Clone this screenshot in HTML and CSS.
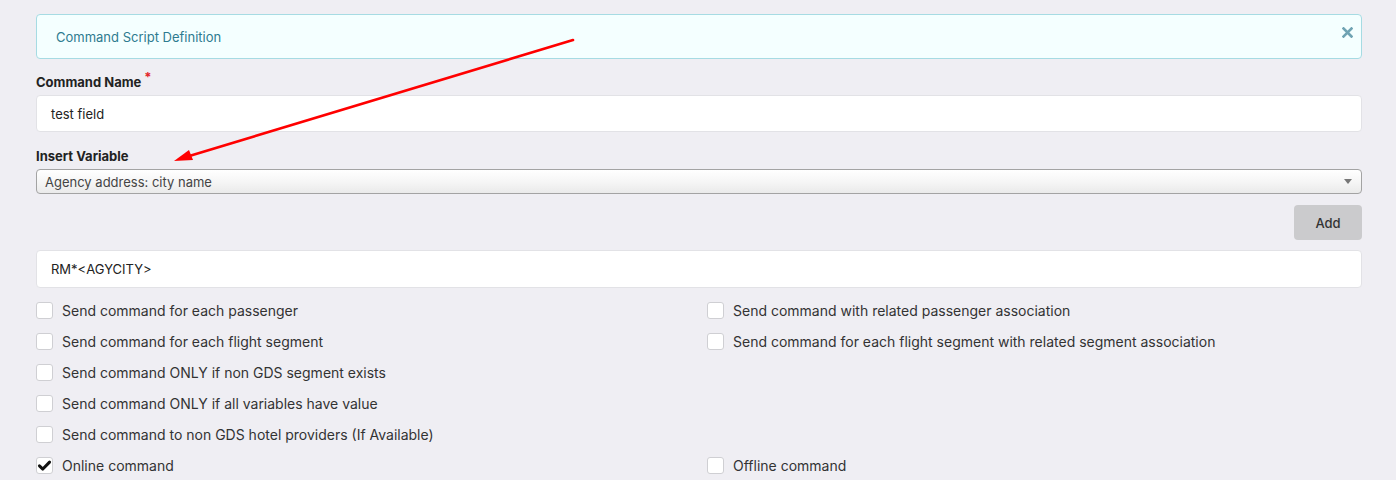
FILE: index.html
```html
<!DOCTYPE html>
<html>
<head>
<meta charset="utf-8">
<link rel="stylesheet" href="styles.css">
</head>
<body>
<div class="page">
  <div class="alert">
    <span class="alert-text">Command Script Definition</span>
    <svg class="alert-close" width="11" height="11" viewBox="0 0 11 11"><path d="M1.5 1.5 L9.5 9.5 M9.5 1.5 L1.5 9.5" stroke="#6fa3b3" stroke-width="2.6" stroke-linecap="square"/></svg>
  </div>

  <div class="field">
    <label class="label">Command Name<span class="req">*</span></label>
    <div class="input">test field</div>
  </div>

  <div class="field">
    <label class="label">Insert Variable</label>
    <div class="select">
      <span>Agency address: city name</span>
      <span class="caret"></span>
    </div>
  </div>

  <div class="actions">
    <button class="btn">Add</button>
  </div>

  <div class="input script">RM*&lt;AGYCITY&gt;</div>

  <div class="checks">
    <div class="check"><span class="box"></span>Send command for each passenger</div>
    <div class="check"><span class="box"></span>Send command with related passenger association</div>
    <div class="check"><span class="box"></span>Send command for each flight segment</div>
    <div class="check"><span class="box"></span>Send command for each flight segment with related segment association</div>
    <div class="check"><span class="box"></span>Send command ONLY if non GDS segment exists</div>
    <div class="check"></div>
    <div class="check"><span class="box"></span>Send command ONLY if all variables have value</div>
    <div class="check"></div>
    <div class="check"><span class="box"></span>Send command to non GDS hotel providers (If Available)</div>
    <div class="check"></div>
    <div class="check"><span class="box checked"><svg viewBox="0 0 16 16" width="15" height="15"><path d="M2.6 8.4 L6.2 11.8 L13.4 4.4" fill="none" stroke="#111" stroke-width="3.2" stroke-linecap="round" stroke-linejoin="round"/></svg></span>Online command</div>
    <div class="check"><span class="box"></span>Offline command</div>
  </div>

  <svg class="annot" width="1396" height="480" viewBox="0 0 1396 480">
    <line x1="573" y1="40" x2="186" y2="157" stroke="#ff0000" stroke-width="2.6" stroke-linecap="round"/>
    <polygon points="174,161 189,150 193,160" fill="#ff0000"/>
  </svg>
</div>
</body>
</html>
```
FILE: styles.css
```css
* { box-sizing: border-box; }
html, body { margin: 0; padding: 0; }
body {
  background: #efeef3;
  font-family: Inter, "Noto Sans", "Liberation Sans", sans-serif;
  color: #333;
  width: 1396px;
  height: 480px;
  overflow: hidden;
}
.page {
  position: relative;
  padding: 14px 34px 0 36px;
}
.alert {
  height: 45px;
  background: #f4ffff;
  border: 1px solid #a6dbe3;
  border-radius: 4px;
  display: flex;
  align-items: center;
  justify-content: space-between;
  padding: 0 8px 0 19px;
}
.alert-text {
  font-size: 13px;
  color: #2e7b90;
}
.alert-close {
  margin-top: -8px;
}
.field { margin-top: 15px; }
.label {
  display: block;
  font-size: 13px;
  font-weight: 700;
  color: #222;
  line-height: 16px;
  margin-bottom: 5px;
}
.req {
  color: #e3262b;
  font-weight: 700;
  position: relative;
  top: -5px;
  margin-left: 3px;
  font-size: 13px;
}
.input {
  height: 37px;
  background: #fff;
  border: 1px solid #e2e2e6;
  border-radius: 4px;
  display: flex;
  align-items: center;
  padding-left: 14px;
  font-size: 13px;
  color: #222;
}
.field + .field { margin-top: 16px; }
.select {
  height: 25px;
  border: 1px solid #a3a3a3;
  border-radius: 4px;
  background: linear-gradient(#ffffff 0%, #f6f6f6 50%, #eaeaea 100%);
  display: flex;
  align-items: center;
  justify-content: space-between;
  padding: 0 9px 0 8px;
  font-size: 13px;
  color: #444;
}
.caret {
  width: 0; height: 0;
  border-left: 4px solid transparent;
  border-right: 4px solid transparent;
  border-top: 5px solid #777;
}
.actions {
  display: flex;
  justify-content: flex-end;
  margin-top: 11px;
}
.btn {
  width: 68px;
  height: 35px;
  background: #cbcbcd;
  border: none;
  border-radius: 4px;
  font-family: inherit;
  font-size: 13px;
  font-weight: 500;
  color: #333;
}
.script { margin-top: 10px; height: 38px; }
.checks {
  margin-top: 7px;
  display: grid;
  grid-template-columns: 671px 1fr;
  grid-auto-rows: 31px;
}
.check {
  display: flex;
  align-items: center;
  font-size: 14px;
  color: #333;
}
.box {
  width: 17px;
  height: 17px;
  background: #fff;
  border: 1px solid #cfcfd3;
  border-radius: 3px;
  margin-right: 9px;
  display: flex;
  align-items: center;
  justify-content: center;
}
.annot {
  position: absolute;
  left: 0;
  top: 0;
  pointer-events: none;
}
```
